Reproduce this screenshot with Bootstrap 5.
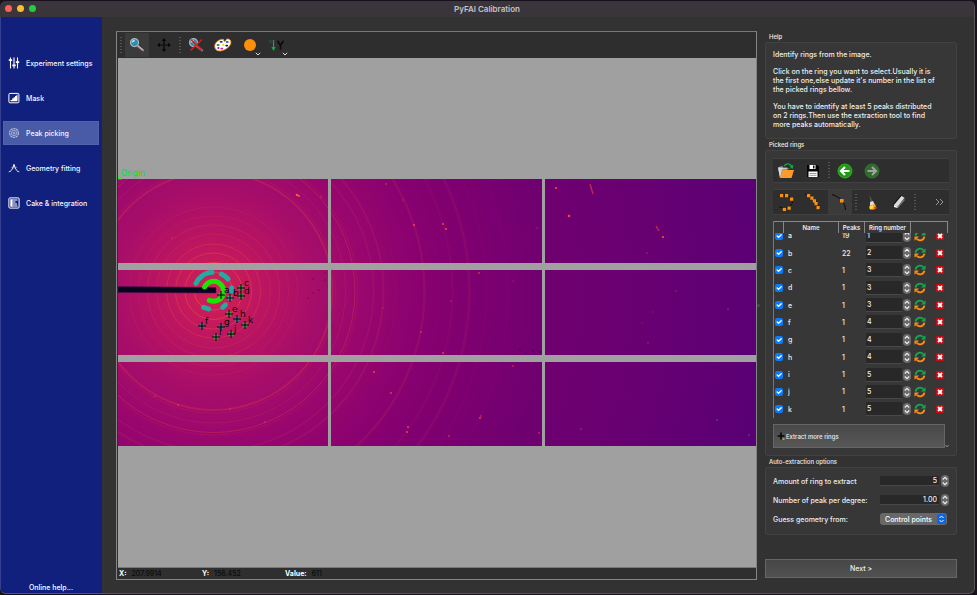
<!DOCTYPE html>
<html lang="en" data-bs-theme="dark">
<head>
<meta charset="utf-8">
<meta name="viewport" content="width=device-width, initial-scale=1">
<title>PyFAI Calibration</title>
<link href="https://cdn.jsdelivr.net/npm/bootstrap@5.3.0/dist/css/bootstrap.min.css" rel="stylesheet">
<style>
body{background:#17101d;color:#eee;font-family:Inter,"Liberation Sans",sans-serif;font-size:7px;line-height:9px;font-weight:500;padding:1px 2px 1px 0}
.app-window{background:#323232;border-radius:6px;overflow:hidden;border-right:1px solid #555;border-bottom:1px solid #555}
.titlebar{height:16px;background:#39353b;color:#c5c2c7;font-size:8px;font-weight:600;position:relative}
.lights{position:absolute;left:5px;top:4px;gap:5px}
.lights span{width:7px;height:7px;border-radius:50%}
.l-close{background:#ff5f57}.l-min{background:#febc2e}.l-max{background:#28c840}
.side{width:102px;background:#12207d;border-left:1px solid #34408f;padding:34px 3px 1px 2px}
.side-link{height:24px;padding-left:4px;gap:6px;color:#f4f5ff;text-decoration:none;border:1px solid transparent}
.side-link svg{width:12px;height:12px}
.side-link.active{background:#495ba6;border-color:#5263ab}
.side-list{gap:11px}
.help-link{color:#fff;text-decoration:none}
.workspace{padding:14px 17px 13px 14px}
.plot{border:1px solid #858585;border-top-color:#777;background:#2f2f2f;padding-left:1px}
.tools{gap:3px;background:#2e2e2e}
.plot .tools{height:26px;padding:0 2px}
.tools .grip{width:2px;height:17px;background:repeating-linear-gradient(#555 0 1px,transparent 1px 3px);flex:none}
.tool{width:24px;height:24px;border:0;padding:0;background:none;color:#111;position:relative;flex:none}
.tool.active{background:#3b3b3b}
.tool svg{width:18px;height:18px;display:block;margin:auto}
.tool .drop{position:absolute;width:6px;height:4px;right:1px;bottom:1px}
.image-area{background:#a0a0a0}
.image-area svg{display:block;width:100%;height:100%}
.image-area text{font-family:"DejaVu Sans",sans-serif;font-weight:400}
.status{height:12px;border-top:1px solid #777;color:#0b0b0b;padding-left:1px}
.status b{color:#fff;font-weight:700}
.status .pos{width:83px;gap:5px}
.splitter{width:8px;color:#555}
.splitter i{width:3px;height:3px;border-radius:50%;background:#4d4d4d}
.panel{width:192px}
.group-title{font-size:6px;line-height:11px;padding-left:4px;margin:0;font-weight:500;color:#eee}
.group{background:#373737;border:1px solid #424242;border-radius:2px;padding:7px}
.group p{margin:0 0 8px}
.group p:last-child{margin:0 0 2px}
.picked{gap:6px}
.picked .tools{height:25px;padding:0 1px;border-top:1px solid #404040;border-bottom:1px solid #404040}
.picked .tools.second{height:26px}
.rings-wrap{height:197px;overflow-y:auto;scrollbar-width:none;border-left:1px solid #777;border-right:1px solid #3a3a3a}
.rings-wrap::-webkit-scrollbar{display:none}
.rings{width:100%;height:203px;table-layout:fixed;border-collapse:separate;border-spacing:0}
.c-check{width:10px}.c-name{width:55px}.c-peaks{width:26px}.c-number{width:46px}.c-refresh{width:19px}
.rings th{position:sticky;top:0;z-index:2;height:12px;padding:0;background:#373737;border-top:1px solid #888;border-right:1px solid #888;text-align:center;font-size:6px;line-height:11px;font-weight:600;white-space:nowrap}
.rings td{padding:0;vertical-align:middle;line-height:9px}
.rings td.nm{padding-left:4px}
.rings td.pk{padding-left:3px}
.rings .form-check-input{width:8px;height:8px;min-height:0;margin:0 0 0 1px;display:block;border:0;border-radius:2px;background-color:#0a7aff;background-size:9px}
.num{background:#282828;border:0;border-bottom:1px solid #484848;color:#f0f0f0;font:inherit;padding:0 2px;min-width:0;border-radius:0;-moz-appearance:textfield;appearance:textfield}
.num::-webkit-inner-spin-button{display:none}
.rings .num{width:36px;height:14px;padding:0 1px;margin-left:1px}
.spin{width:8px;height:12px;border:0;padding:0;border-radius:4px;background:#6a6a6a;flex:none}
.spin svg,.act svg{display:block;width:100%;height:100%}
.act{border:0;padding:0;background:none;width:12px;height:12px;display:block;margin-left:3px}
.act.del{width:8px;height:8px;margin-left:6px}
.wide-btn{border:1px solid #666;border-radius:0;background:linear-gradient(#494949,#575757);color:#eee;padding:0 5px;font:inherit}
.extract{height:24px;font-size:6px;gap:1px;padding:0 3px}
.next{height:19px;background:linear-gradient(#474747,#515151);margin-bottom:2px;font-size:7px}
.auto{gap:7px;padding:7px 7px 9px}
.auto .opt{height:12px}
.auto .num{width:59px;height:10px;text-align:right}
.auto .ctl{width:69px;gap:2px}
.auto select{width:67px;height:12px;border:0;border-radius:3px;color:#fff;font:inherit;padding:0 5px;appearance:none;background:#686868 url("data:image/svg+xml,%3Csvg xmlns='http://www.w3.org/2000/svg' viewBox='0 0 9 10'%3E%3Crect width='9' height='10' rx='2' fill='%230a66e8'/%3E%3Cpath d='M2.5 4 4.5 2 6.5 4M2.5 6 4.5 8 6.5 6' fill='none' stroke='white'/%3E%3C/svg%3E") no-repeat right 1px center/9px 10px}
</style>
<script src="https://cdn.jsdelivr.net/npm/bootstrap@5.3.0/dist/js/bootstrap.bundle.min.js"></script>
</head>
<body class="vh-100">
<svg class="d-none">
<symbol id="updown" viewBox="0 0 8 12"><path d="M1.800 4.500 4 2.300 6.200 4.500M1.800 7.500 4 9.700 6.200 7.500" fill="none" stroke="#eee" stroke-width="1.200"/></symbol>
<symbol id="chev" viewBox="0 0 6 4"><path d="M.8.8 3 3 5.2.8" fill="none" stroke="#ddd"/></symbol>
<symbol id="refresh" viewBox="0 0 12 12"><path d="M1.600 5.600A4.400 4.400 0 0 1 9.300 3.200" fill="none" stroke="#13a851" stroke-width="1.900"/><path d="M7 5.600h4.500V1.300z" fill="#13a851"/><path d="M10.400 6.600A4.400 4.400 0 0 1 2.800 8.900" fill="none" stroke="#ff8c0a" stroke-width="1.900"/><path d="M5 6.500H.5v4.300z" fill="#ff8c0a"/></symbol>
<symbol id="cross" viewBox="0 0 8 8"><rect width="8" height="8" rx=".6" fill="#c80b12"/><path d="M2 2 6 6M6 2 2 6" stroke="#fff" stroke-width="1.8"/></symbol>
<symbol id="lens" viewBox="0 0 18 18"><path d="m9.5 9.8 5.6 4.6" stroke="#8f7a80" stroke-width="2.2" stroke-linecap="round"/><path d="m9.5 9.4 5.6 4.6" stroke="#e8d4d8" stroke-width=".9"/><circle cx="6.5" cy="6.6" r="4" fill="#2d8fb0" stroke="#aeb4b6" stroke-width="1.2"/><path d="M3.7 6.5A3 3 0 0 1 7 3.8C7 5.5 5.5 6.8 3.7 6.5z" fill="#a9dbe8"/></symbol>
</svg>
<div class="app-window d-flex flex-column h-100">
<header class="titlebar d-flex align-items-center justify-content-center flex-shrink-0">
<div class="lights d-flex"><span class="l-close"></span><span class="l-min"></span><span class="l-max"></span></div>
<span>PyFAI Calibration</span>
</header>
<div class="d-flex flex-grow-1 overflow-hidden">
<nav class="side d-flex flex-column flex-shrink-0">
<div class="side-list d-flex flex-column">
<a href="#" class="side-link d-flex align-items-center"><svg viewBox="0 0 12 12" stroke="#fff" fill="none"><path d="M2.5.5v11M6 .5v11M9.5.5v11" stroke-width="1.1"/><path d="M.8 3.2h3.4M4.3 8.4h3.4M7.8 5.2h3.4" stroke-width="1.8"/></svg>Experiment settings</a>
<a href="#" class="side-link d-flex align-items-center"><svg viewBox="0 0 12 12"><rect x=".9" y="1.4" width="10" height="9.4" rx="1" fill="none" stroke="#fff"/><path d="M2.5 9.3V8h1.6V6.6h1.5V5.2H7V4h1.5V2.8h1v6.5z" fill="#fff"/></svg>Mask</a>
<a href="#" class="side-link active d-flex align-items-center" aria-current="page"><svg viewBox="0 0 12 12" fill="none" stroke="#b4bddc"><circle cx="6" cy="6" r="4.4" stroke-width="1.2" stroke-dasharray="2.2 .6"/><circle cx="6" cy="6" r="2.7" stroke="#9aa6ce"/><circle cx="6" cy="6" r="1"/></svg>Peak picking</a>
<a href="#" class="side-link d-flex align-items-center"><svg viewBox="0 0 12 12" fill="none" stroke="#fff"><path d="M.8 9.8C3.5 9.5 4.3 7 6 2.4 7.7 7 8.500 9.500 11.200 9.800"/><path d="M6 4v2.500M3.500 5.400l1 .8M8.500 5.400l-1 .8" stroke-width=".7"/></svg>Geometry fitting</a>
<a href="#" class="side-link d-flex align-items-center"><svg viewBox="0 0 12 12"><rect x=".9" y=".9" width="10.200" height="10.200" rx="1" fill="none" stroke="#fff"/><path d="M2.300 2.300h2v7.400h-2z" fill="#fff"/><path d="M4 3h5.500M4 5h3.500M4 7h5M4 9h5.500" stroke="#fff" stroke-width="1.100"/></svg>Cake &amp; integration</a>
</div>
<div class="mt-auto text-center"><a href="#" class="help-link">Online help...</a></div>
</nav>
<main class="workspace d-flex flex-grow-1 overflow-hidden">
<section class="plot d-flex flex-column flex-grow-1 overflow-hidden">
<div class="tools d-flex align-items-center flex-shrink-0">
<span class="grip"></span>
<button class="tool active" aria-label="Zoom"><svg><use href="#lens"/></svg></button>
<button class="tool" aria-label="Pan"><svg viewBox="0 0 18 18"><path d="M9 3v12M3 9h12" stroke="#080808" stroke-width="1.200"/><path d="M9 2 6.800 5h4.400zM9 16l-2.200-3h4.400zM2 9l3-2.200v4.400zM16 9l-3-2.200v4.400z" fill="#080808"/></svg></button>
<span class="grip"></span>
<button class="tool" aria-label="Reset zoom"><svg viewBox="0 0 18 18"><use href="#lens" width="18" height="18"/><path d="M4 3.500 15 14.500M15 3.500 3.500 14.500" stroke="#ee1111" stroke-width="1.500"/></svg></button>
<button class="tool" aria-label="Colormap"><svg viewBox="0 0 18 18"><path d="M1 12C-.5 7 5 3 9.300 3.300c1.200.3-.3 2.200 1.500 2.100 1.700-.2.700-2.600 3-2.500C18 3.300 17.800 8.500 14 11.500 10 15 2.500 16.800 1 12z" fill="#fff" stroke="#f58a1c" stroke-width=".8"/><g stroke-width="1.800" stroke-linecap="round"><path d="M6.500 5.800h1.300" stroke="#4b2ba0"/><path d="M3.500 9h1.200" stroke="#17a34a"/><path d="M9 8.800h.6" stroke="#e7d900"/><path d="M12.800 6h1" stroke="#1976d2"/><path d="M12.200 9.600h1" stroke="#222"/><path d="M4.200 12h.3" stroke="#7d1fa0"/><path d="M7.300 12.600h1" stroke="#e0218a"/></g></svg></button>
<button class="tool" aria-label="Symbol"><svg viewBox="0 0 18 18"><circle cx="9" cy="9" r="6" fill="#ff8f0a"/></svg><svg class="drop"><use href="#chev"/></svg></button>
<button class="tool" aria-label="Y axis direction"><svg viewBox="0 0 18 18"><path d="M5.500 4v8" stroke="#18a84a" stroke-width="1.200"/><path d="M3.300 11h4.400l-2.200 4z" fill="#18a84a"/><circle cx="2.500" cy="5.500" r="1.100" fill="none" stroke="#19683a" stroke-width=".7"/><path d="m9.500 5 3 4.300 3-4.300M12.500 9v4.500" fill="none" stroke="#0a0a0a" stroke-width="1.700"/></svg><svg class="drop"><use href="#chev"/></svg></button>
</div>
<div class="image-area flex-grow-1 overflow-hidden">
<svg viewBox="0 0 638 509" id="detector" role="img" aria-label="Diffraction image">
<defs>
<clipPath id="tiles"><path d="M0 121h210v84H0zM213 121h211v84H213zM427 121h211v84H427zM0 212h210v85H0zM213 212h211v85H213zM427 212h211v85H427zM0 304h210v84H0zM213 304h211v84H213zM427 304h211v84H427z"/></clipPath>
<radialGradient id="glow" gradientUnits="userSpaceOnUse" cx="95" cy="233" r="560"><stop offset="0" stop-color="#d02258"/><stop offset=".05" stop-color="#c61b5c"/><stop offset=".11" stop-color="#b61363"/><stop offset=".19" stop-color="#a50d6a"/><stop offset=".28" stop-color="#97066e"/><stop offset=".4" stop-color="#850070"/><stop offset=".6" stop-color="#700070"/><stop offset=".8" stop-color="#670073"/><stop offset="1" stop-color="#580075"/></radialGradient>
</defs>
<g clip-path="url(#tiles)">
<rect y="121" width="638" height="267" fill="url(#glow)"/>
<g id="halos" fill="none"></g>
<g id="spots"></g>
<path d="M0 228.500 98 229.500V235L0 234.500z" fill="#08041c" stroke="#51105a" stroke-width=".6"/>
</g>
<g fill="none" stroke-linecap="round" stroke-width="5">
<path d="M86.600 229A10 10 0 1 1 91.300 242.300" stroke="#16e800"/>
<path d="M78 225.300A19 19 0 0 1 84 218M86.500 216.300A19 19 0 0 1 94 214.300M103.300 216A19 19 0 0 1 110 221M113.700 230V233M85.700 249.300 90.700 251M104.700 249.300 107.300 247" stroke="#25aaa0"/>
</g>
<g id="marks"></g>
<path d="M0 117v4h4" fill="none" stroke="#0f0"/>
<text x="3" y="118" font-size="8" fill="#00e600">Origin</text>
</svg>
</div>
<div class="status d-flex align-items-center flex-shrink-0">
<div class="pos d-flex"><b>X:</b><span>207.9914</span></div>
<div class="pos d-flex"><b>Y:</b><span>156.452</span></div>
<div class="pos d-flex"><b>Value:</b><span>611</span></div>
</div>
</section>
<div class="splitter d-flex align-items-center flex-shrink-0"><i></i></div>
<aside class="panel d-flex flex-column flex-shrink-0">
<h2 class="group-title">Help</h2>
<div class="group">
<p>Identify rings from the image.</p>
<p>Click on the ring you want to select.Usually it is<br>the first one,else update it's number in the list of<br>the picked rings bellow.</p>
<p>You have to identify at least 5 peaks distributed<br>on 2 rings.Then use the extraction tool to find<br>more peaks automatically.</p>
</div>
<h2 class="group-title">Picked rings</h2>
<div class="group picked d-flex flex-column">
<div class="tools d-flex align-items-center">
<button class="tool" aria-label="Open"><svg viewBox="0 0 18 18"><path d="M1 5.500 5 4l1.500 1.500h4V14L3 16z" fill="#9b9b9b"/><path d="M1 5.500 3 16l2-9h9z" fill="#d8d8d8"/><path d="M3 16 6 8h11l-2.500 8z" fill="#ff9a28"/><path d="M7 4C9.500 1 13 1.500 14.500 4" fill="none" stroke="#18a84a" stroke-width="1.300"/><path d="m16.500 3-.8 4-3.200-2.500z" fill="#18a84a"/></svg></button>
<button class="tool" aria-label="Save"><svg viewBox="0 0 18 18"><path d="M3 3h10.500L15 4.500V15H3z" fill="#050505"/><path d="M5.500 3h6v4h-6zM4.500 9.500h9V15h-9z" fill="#fff"/><path d="M9 3.500h1.500v3H9z" fill="#111"/><path d="M5.500 11.500h7M5.500 13.300h7" stroke="#555" stroke-width=".6"/></svg></button>
<span class="grip"></span>
<button class="tool" aria-label="Undo"><svg viewBox="0 0 18 18"><circle cx="9" cy="9" r="7" fill="#1d9b13" stroke="#3cc42a" stroke-width=".7"/><path d="M13.500 9H5.500M9 5 5 9l4 4" fill="none" stroke="#fff" stroke-width="2.200"/></svg></button>
<button class="tool" aria-label="Redo"><svg viewBox="0 0 18 18"><circle cx="9" cy="9" r="7" fill="#2c6b29" stroke="#3f7c3c" stroke-width=".7"/><path d="M4.500 9h8M9 5l4 4-4 4" fill="none" stroke="#a2a2a2" stroke-width="2.200"/></svg></button>
</div>
<div class="tools second d-flex align-items-center">
<button class="tool" aria-label="Ring selection"><svg viewBox="0 0 18 18"><path d="M3 3C10 1 16 4 15.500 9 15 13.500 9 16 2 14" fill="none" stroke="#111"/><path d="M3 1h3.200v3.200H3zM8 1h3.200v3.200H8zM13 4.500h3.200v3.200H13zM10.500 13.500h3.200v3.200h-3.200zM5.800 14.700H9v3.200H5.800z" fill="#ff8f0a"/></svg></button>
<button class="tool" aria-label="Arc selection"><svg viewBox="0 0 18 18"><path d="M1 1C9 3 14 9 15.500 17" fill="none" stroke="#111"/><path d="M3 1h3.200v3.200H3zM6.300 3.500h3.200v3.200H6.300zM8.800 6.300H12v3.200H8.800zM10.500 9h3.200v3.200h-3.200zM12.500 13h3.200v3.200h-3.200z" fill="#ff8f0a"/></svg></button>
<button class="tool active" aria-label="Peak selection"><svg viewBox="0 0 18 18"><path d="M1 1.500C9 4 14 9 14.500 17" fill="none" stroke="#0a0a0a"/><path d="M9 6h3.600v3.600H9z" fill="#ff8f0a"/></svg></button>
<span class="grip"></span>
<button class="tool" aria-label="Brush"><svg viewBox="0 0 18 18"><path d="m6 1 4 8-2 1z" fill="#555"/><path d="m7 9 3-1 2 4-5 1z" fill="#ddd"/><path d="M6.500 12.500 12 11l1.500 4c-2 2-5 2-7 1z" fill="#ffa51e"/><path d="m6.500 14 3-2 1 2-3 2.500z" fill="#ffdd52"/><path d="m11 14 2-.5.500 2-2 .8z" fill="#e53b20"/></svg></button>
<button class="tool" aria-label="Eraser"><svg viewBox="0 0 18 18"><path d="m4 12 7.500-9 3 1.800L7.500 14z" fill="#ddd"/><path d="m7.500 14 7-9.200v2.700L8 15z" fill="#777"/><path d="M4 12v2l3.500 1V14z" fill="#fff"/><path d="m3 11.500 8-9" stroke="#111"/></svg></button>
<span class="grip"></span>
<button class="tool ms-auto" aria-label="More tools"><svg viewBox="0 0 18 18"><path d="m9 6 3 3-3 3M13 6l3 3-3 3" fill="none" stroke="#999"/></svg></button>
</div>
<div class="rings-wrap" id="ringsWrap">
<table class="rings">
<colgroup><col class="c-check"><col class="c-name"><col class="c-peaks"><col class="c-number"><col class="c-refresh"><col></colgroup>
<thead><tr><th aria-label="Enabled"></th><th>Name</th><th>Peaks</th><th>Ring number</th><th colspan="2" aria-label="Actions"></th></tr></thead>
<tbody id="ringRows"></tbody>
</table>
</div>
<div class="d-flex align-items-end">
<button class="wide-btn extract d-flex align-items-center flex-grow-1"><svg width="8" height="8" viewBox="0 0 8 8"><path d="M4 .5v7M.5 4h7" stroke="#050505" stroke-width="1.500"/><path d="M5.500 6h2v2h-2z" fill="#f68a1c"/><path d="M5.500 5.500h1.500v1H5.500z" fill="#18a84a"/></svg>Extract more rings</button>
<svg width="4" height="4" viewBox="0 0 6 4"><use href="#chev"/></svg>
</div>
</div>
<h2 class="group-title">Auto-extraction options</h2>
<div class="group auto d-flex flex-column">
<div class="opt d-flex align-items-center justify-content-between"><label for="amount">Amount of ring to extract</label><div class="ctl d-flex align-items-center"><input id="amount" class="num" type="number" value="5"><button class="spin" aria-label="Step amount"><svg><use href="#updown"/></svg></button></div></div>
<div class="opt d-flex align-items-center justify-content-between"><label for="density">Number of peak per degree:</label><div class="ctl d-flex align-items-center"><input id="density" class="num" type="text" value="1.00"><button class="spin" aria-label="Step density"><svg><use href="#updown"/></svg></button></div></div>
<div class="opt d-flex align-items-center justify-content-between"><label for="guess">Guess geometry from:</label><div class="ctl d-flex"><select id="guess"><option>Control points</option></select></div></div>
</div>
<button class="wide-btn next mt-auto">Next &gt;</button>
</aside>
</main>
</div>
</div>
<script>
const rings=[['a',19,1],['b',22,2],['c',1,3],['d',1,3],['e',1,3],['f',1,4],['g',1,4],['h',1,4],['i',1,5],['j',1,5],['k',1,5]];
document.getElementById('ringRows').innerHTML=rings.map(([n,p,r])=>`<tr><td><input class="form-check-input" type="checkbox" checked aria-label="Enable ring ${n}"></td><td class="nm">${n}</td><td class="pk">${p}</td><td><div class="d-flex align-items-center justify-content-between"><input class="num" type="number" value="${r}" aria-label="Ring number of ${n}"><button class="spin" aria-label="Step ring ${n}"><svg><use href="#updown"/></svg></button></div></td><td><button class="act" aria-label="Refresh ${n}"><svg><use href="#refresh"/></svg></button></td><td><button class="act del" aria-label="Delete ${n}"><svg><use href="#cross"/></svg></button></td></tr>`).join('');
document.getElementById('ringsWrap').scrollTop=6;
// radius, width, opacity, colour of each powder ring
const halos=[[19,.8,.8,'#f0503c'],[28.500,.8,.8,'#f04a3c'],[38,.8,.7,'#ee403f'],[47,.8,.6,'#ea3a44'],[57,.7,.4,'#e83848'],[66,.8,.45,'#e23648'],[75,.7,.3,'#dd3450'],[84,.7,.3,'#dd3450'],[119,2,.35,'#dc3450'],[122,1,.2,'#dc3450'],[132,1,.25,'#d83250'],[141.500,1,.45,'#d83250'],[144,1,.2,'#d83250'],[160,1.500,.25,'#c42860'],[170,2,.25,'#c42860'],[182,1,.14,'#b82462'],[211,2.500,.22,'#c02862'],[226,1,.1,'#b02066'],[239,2,.14,'#b02066'],[256,3,.2,'#b02066'],[273,2,.12,'#a01a6a'],[281,1,.1,'#a01a6a'],[295,2,.08,'#a01a6a']];
document.getElementById('halos').innerHTML=halos.map(([r,w,o,c])=>`<circle cx="95.500" cy="233" r="${r}" stroke="${c}" stroke-width="${w}" opacity="${o}"/>`).join('');
// x, y, radius, colour
const spots=[[179,137,1.300,'#ff5a2e'],[181,138,1,'#ff5a2e'],[203,139,.7,'#e83a3c'],[54,180,.6,'#f4503c'],[268,126,.8,'#e83a3c'],[285,142,.7,'#d83250'],[296,167,1,'#ff4a3a'],[325,166,.9,'#ff4a3a'],[328,171,.9,'#ff5a3a'],[419,170,.7,'#c82850'],[438,130,1.100,'#ff4a3a'],[451,158,1.300,'#ff4a2e'],[545,179,1.100,'#ff5a1e'],[529,195,.5,'#a89a70'],[361,215,.9,'#d83250'],[395,223,.6,'#d83250'],[333,243,.8,'#c82850'],[265,250,.7,'#d83250'],[303,274,.8,'#f04a3c'],[325,295,1,'#e03a4c'],[558,233,.7,'#c82850'],[535,254,.8,'#901a6a'],[524,265,.7,'#901a6a'],[530,285,.8,'#b82260'],[610,251,.5,'#b0a890'],[60,347,.8,'#f0503c'],[37,338,.7,'#e84040'],[112,351,.7,'#e84040'],[147,364,.8,'#e84040'],[256,314,.9,'#f0503c'],[273,335,.9,'#e84040'],[290,369,1,'#f0404c'],[289,374,1,'#f0404c'],[362,360,1,'#e83a4c'],[363,358,.8,'#e83a4c'],[331,378,1,'#c82850'],[421,375,.9,'#c82850'],[395,308,.9,'#c82850'],[463,371,.5,'#b0a890'],[599,362,.5,'#b0a890'],[631,377,.5,'#b0a890'],[195,221,.5,'#260a2a'],[207,215,.5,'#260a2a'],[207,222,.5,'#260a2a'],[195,235,.5,'#260a2a'],[201,232,.5,'#260a2a'],[190,240,.5,'#260a2a'],[402,292,.7,'#1a0624'],[408,295,.6,'#1a0624'],[415,293,.7,'#1a0624'],[422,294,.8,'#1a0624']];
document.getElementById('spots').innerHTML=spots.map(([x,y,r,c])=>`<circle cx="${x}" cy="${y}" r="${r}" fill="${c}"/>`).join('')+'<path d="m472 126 3 10M538 168l3 5" stroke="#c82a50" stroke-width="1.300"/>';
const marks=[['a',103,237,'#12d010'],['b',112,240,'#25aaa0'],['c',123,230,'#3f9a50'],['d',123,238,'#3f9a50'],['e',111,256,'#5a9048'],['f',84,268,'#45708c'],['g',103,269,'#45708c'],['h',119,261,'#45708c'],['i',98,279,'#4a9050'],['j',113,276,'#4a9050'],['k',127,267,'#4a9050']];
document.getElementById('marks').innerHTML=marks.map(([n,x,y,c])=>`<circle cx="${x}" cy="${y}" r="2.700" fill="${c}"/><path d="M${x-4} ${y}h8M${x} ${y-4}v8" stroke="#000"/><text x="${x+3}" y="${y-2}" font-size="9">${n}</text>`).join('');
</script>
</body>
</html>
